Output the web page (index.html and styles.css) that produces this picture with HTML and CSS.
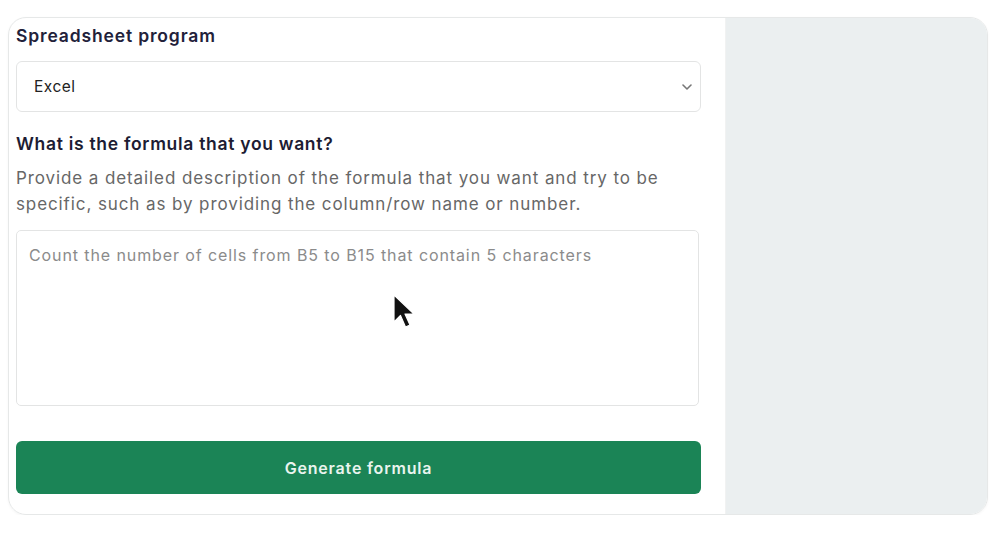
FILE: index.html
```html
<!DOCTYPE html>
<html lang="en">
<head>
    <meta charset="UTF-8">
    <meta name="viewport" content="width=device-width, initial-scale=1.0">
    <title>Formula generator</title>
    <link rel="stylesheet" href="styles.css">
</head>
<body>
    <div class="card">
        <div class="form">
            <label class="label">Spreadsheet program</label>
            <div class="select">
                <span>Excel</span>
                <svg class="chevron" width="10" height="6" viewBox="0 0 10 6">
                    <path d="M1 1l4 4 4-4" fill="none" stroke="#777" stroke-width="1.6" stroke-linecap="round" stroke-linejoin="round"/>
                </svg>
            </div>

            <h3 class="question">What is the formula that you want?</h3>
            <p class="hint">Provide a detailed description of the formula that you want and try to be specific, such as by providing the column/row name or number.</p>

            <div class="area-wrap">
                <textarea class="area" placeholder="Count the number of cells from B5 to B15 that contain 5 characters"></textarea>
                <!-- mouse pointer from the recording -->
                <svg class="pointer" width="22" height="36" viewBox="0 0 22 36">
                    <path d="M1 1v27l6.5-6.5 5 11.5 4.5-2-5-11h9z" fill="#111" stroke="#fff" stroke-width="1.2" stroke-linejoin="round"/>
                </svg>
            </div>

            <button class="btn">Generate formula</button>
        </div>
        <div class="side"></div>
    </div>
</body>
</html>
```

FILE: styles.css
```css
body {
    margin: 0;
    background: #fff;
    font-family: Inter, "Noto Sans", sans-serif;
}
.card {
    display: flex;
    width: 980px;
    height: 498px;
    margin: 17px 0 0 8px;
    border: 1px solid #e6e8e8;
    border-radius: 18px;
    overflow: hidden;
    box-sizing: border-box;
    box-shadow: 0 1px 3px rgba(0, 0, 0, .04);
}
.form {
    width: 717px;
    box-sizing: border-box;
    padding: 6px 24px 0 7px;
    display: flex;
    flex-direction: column;
    border-right: 1px solid #f1f2f2;
}
.label {
    font-size: 17.5px;
    line-height: 24px;
    font-weight: 600;
    color: #22213a;
    letter-spacing: .85px;
}
.select {
    margin-top: 13px;
    height: 51px;
    border: 1px solid #e3e4e4;
    border-radius: 6px;
    box-sizing: border-box;
    display: flex;
    align-items: center;
    justify-content: space-between;
    padding: 0 8px 0 17px;
    font-size: 15.5px;
    letter-spacing: .5px;
    color: #222;
}
.question {
    margin: 20px 0 0;
    font-size: 17.5px;
    line-height: 24px;
    font-weight: 600;
    color: #1d1c33;
    letter-spacing: .7px;
}
.hint {
    margin: 9px 0 0;
    font-size: 17px;
    line-height: 26px;
    color: #676767;
    letter-spacing: .9px;
    padding-right: 24px;
}
.area-wrap {
    position: relative;
    margin-top: 13px;
}
.area {
    display: block;
    width: 683px;
    height: 176px;
    box-sizing: border-box;
    border: 1px solid #e3e4e4;
    border-radius: 5px;
    padding: 14px 12px;
    font-family: inherit;
    font-size: 16px;
    letter-spacing: .9px;
    color: #333;
    resize: none;
    outline: none;
}
.area::placeholder {
    color: #8b8b8b;
}
.pointer {
    position: absolute;
    left: 377px;
    top: 64px;
}
.btn {
    margin-top: 35px;
    height: 53px;
    border: 0;
    border-radius: 6px;
    background: #1b8456;
    color: #e9f4ee;
    font-family: inherit;
    font-size: 16px;
    letter-spacing: .8px;
    font-weight: 600;
}
.side {
    flex: 1;
    background: #ebeff0;
}
```
